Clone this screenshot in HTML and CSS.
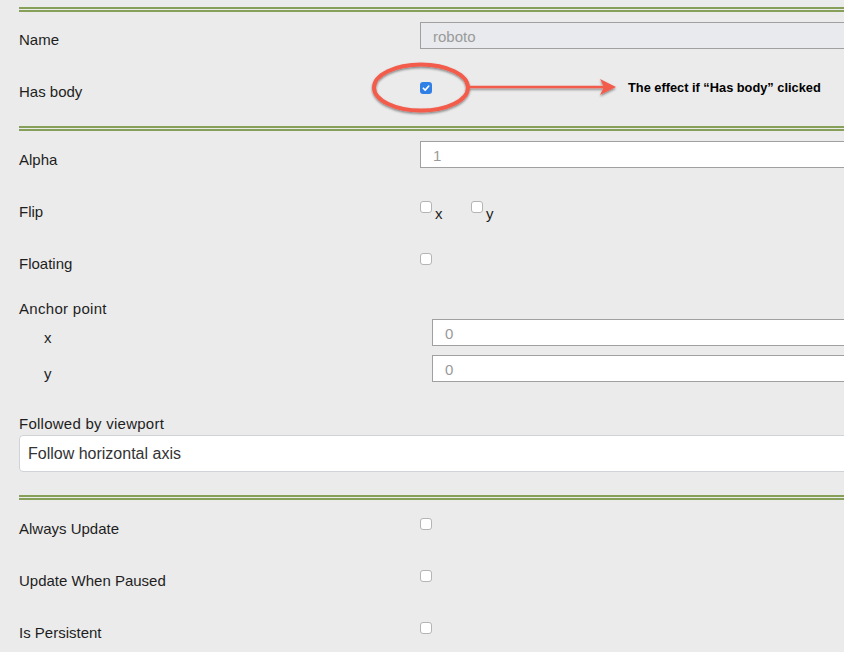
FILE: index.html
```html
<!DOCTYPE html>
<html lang="en">
<head>
    <meta charset="UTF-8">
    <meta name="viewport" content="width=device-width, initial-scale=1.0">
    <title>Sprite properties</title>
    <link rel="stylesheet" href="styles.css">
</head>
<body>
    <div class="panel">
        <div class="sep first"></div>
        <div class="row">
            <label class="lbl">Name</label>
            <input class="field disabled" type="text" value="roboto" disabled>
        </div>
        <div class="row">
            <label class="lbl">Has body</label>
            <span class="check checked">
                <svg width="12" height="12" viewBox="0 0 12 12"><path d="M3.3 6.2 L5.2 8.1 L8.8 4" fill="none" stroke="#fff" stroke-width="1.6" stroke-linecap="round" stroke-linejoin="round"/></svg>
            </span>
        </div>
        <div class="sep"></div>
        <div class="row">
            <label class="lbl">Alpha</label>
            <input class="field" type="text" value="1">
        </div>
        <div class="row">
            <label class="lbl">Flip</label>
            <div class="flip">
                <input class="box" type="checkbox"><span class="axis">x</span>
                <input class="box" type="checkbox"><span class="axis">y</span>
            </div>
        </div>
        <div class="row">
            <label class="lbl">Floating</label>
            <input class="box" type="checkbox">
        </div>
        <div class="group">
            <div class="group-title">Anchor point</div>
            <div class="subrow">
                <label class="sublbl">x</label>
                <input class="field" type="text" value="0">
            </div>
            <div class="subrow">
                <label class="sublbl">y</label>
                <input class="field" type="text" value="0">
            </div>
        </div>
        <div class="select-block">
            <div class="select-title">Followed by viewport</div>
            <div class="select">Follow horizontal axis</div>
        </div>
        <div class="sep"></div>
        <div class="row">
            <label class="lbl">Always Update</label>
            <input class="box" type="checkbox">
        </div>
        <div class="row">
            <label class="lbl">Update When Paused</label>
            <input class="box" type="checkbox">
        </div>
        <div class="row">
            <label class="lbl">Is Persistent</label>
            <input class="box" type="checkbox">
        </div>

        <!-- annotation drawn on top of the screenshot -->
        <svg class="markup" width="844" height="140" viewBox="0 0 844 140">
            <defs>
                <filter id="shadow" x="-20%" y="-50%" width="140%" height="200%">
                    <feDropShadow dx="0" dy="1.5" stdDeviation="1.2" flood-color="#000" flood-opacity="0.45"/>
                </filter>
            </defs>
            <g filter="url(#shadow)">
                <ellipse cx="421" cy="87.5" rx="47" ry="23" fill="none" stroke="#f35c4c" stroke-width="4"/>
                <line x1="468" y1="87" x2="606" y2="87" stroke="#f35c4c" stroke-width="2.5"/>
                <path d="M600 79 L616 87 L600 95 L604 87 Z" fill="#f35c4c"/>
            </g>
        </svg>
        <div class="note">The effect if “Has body” clicked</div>
    </div>
</body>
</html>
```

FILE: styles.css
```css
body {
    margin: 0;
    background: #ebebeb;
    font-family: "Liberation Sans", Arial, sans-serif;
    color: #1e1e1e;
    overflow: hidden;
}

.panel {
    position: relative;
    width: 1000px;
    padding: 7px 0 0 19px;
}

.sep {
    height: 1px;
    border-top: 2px solid #86a05a;
    border-bottom: 2px solid #86a05a;
    margin: 8px 0 3px;
}

.sep.first {
    margin: 0 0 2px;
}

.row {
    display: grid;
    grid-template-columns: 401px 1fr;
    align-items: start;
    height: 52px;
}

.lbl {
    font-size: 15px;
    line-height: 18px;
    padding-top: 17px;
}

.field {
    box-sizing: border-box;
    height: 27px;
    margin: 7px 0 0;
    padding: 2px 12px 0;
    border: 1px solid #a0a0a0;
    background: #fff;
    font-family: "Liberation Sans", Arial, sans-serif;
    font-size: 15px;
    color: #9a9a9a;
    outline: none;
}

.field.disabled {
    margin-top: 8px;
    background: #e8eaed;
}

.box {
    appearance: none;
    -webkit-appearance: none;
    box-sizing: border-box;
    width: 12px;
    height: 12px;
    margin: 15px 0 0;
    border: 1px solid #b4b4b4;
    border-radius: 3px;
    background: #fff;
}

.check {
    display: block;
    width: 12px;
    height: 12px;
    margin-top: 16px;
    border-radius: 3px;
}

.check.checked {
    background: #2f7fe6;
}

.check svg {
    display: block;
}

.flip {
    display: flex;
    align-items: flex-start;
}

.axis {
    font-size: 15px;
    line-height: 18px;
    padding: 19px 0 0 3px;
    width: 36px;
}

.group {
    padding-top: 10px;
}

.group-title {
    font-size: 15px;
    line-height: 18px;
    margin-bottom: 1px;
    letter-spacing: 0.3px;
}

.subrow {
    display: grid;
    grid-template-columns: 413px 1fr;
    align-items: start;
    height: 36px;
}

.sublbl {
    font-size: 15px;
    line-height: 18px;
    padding: 10px 0 0 25px;
}

.subrow .field {
    margin: 0;
}

.select-block {
    margin-top: 24px;
}

.select-title {
    font-size: 15px;
    line-height: 18px;
    margin-bottom: 2px;
    letter-spacing: 0.25px;
}

.select {
    box-sizing: border-box;
    height: 37px;
    padding: 0 8px;
    border: 1px solid #cfd3d8;
    border-radius: 4px;
    background: #fff;
    font-size: 16px;
    line-height: 35px;
    color: #333;
}

.select-block + .sep {
    margin-top: 23px;
}

.markup {
    position: absolute;
    left: 0;
    top: 0;
    pointer-events: none;
}

.note {
    position: absolute;
    left: 628px;
    top: 80px;
    font-size: 12.8px;
    line-height: 16px;
    font-weight: bold;
    color: #000;
    white-space: nowrap;
}
```
